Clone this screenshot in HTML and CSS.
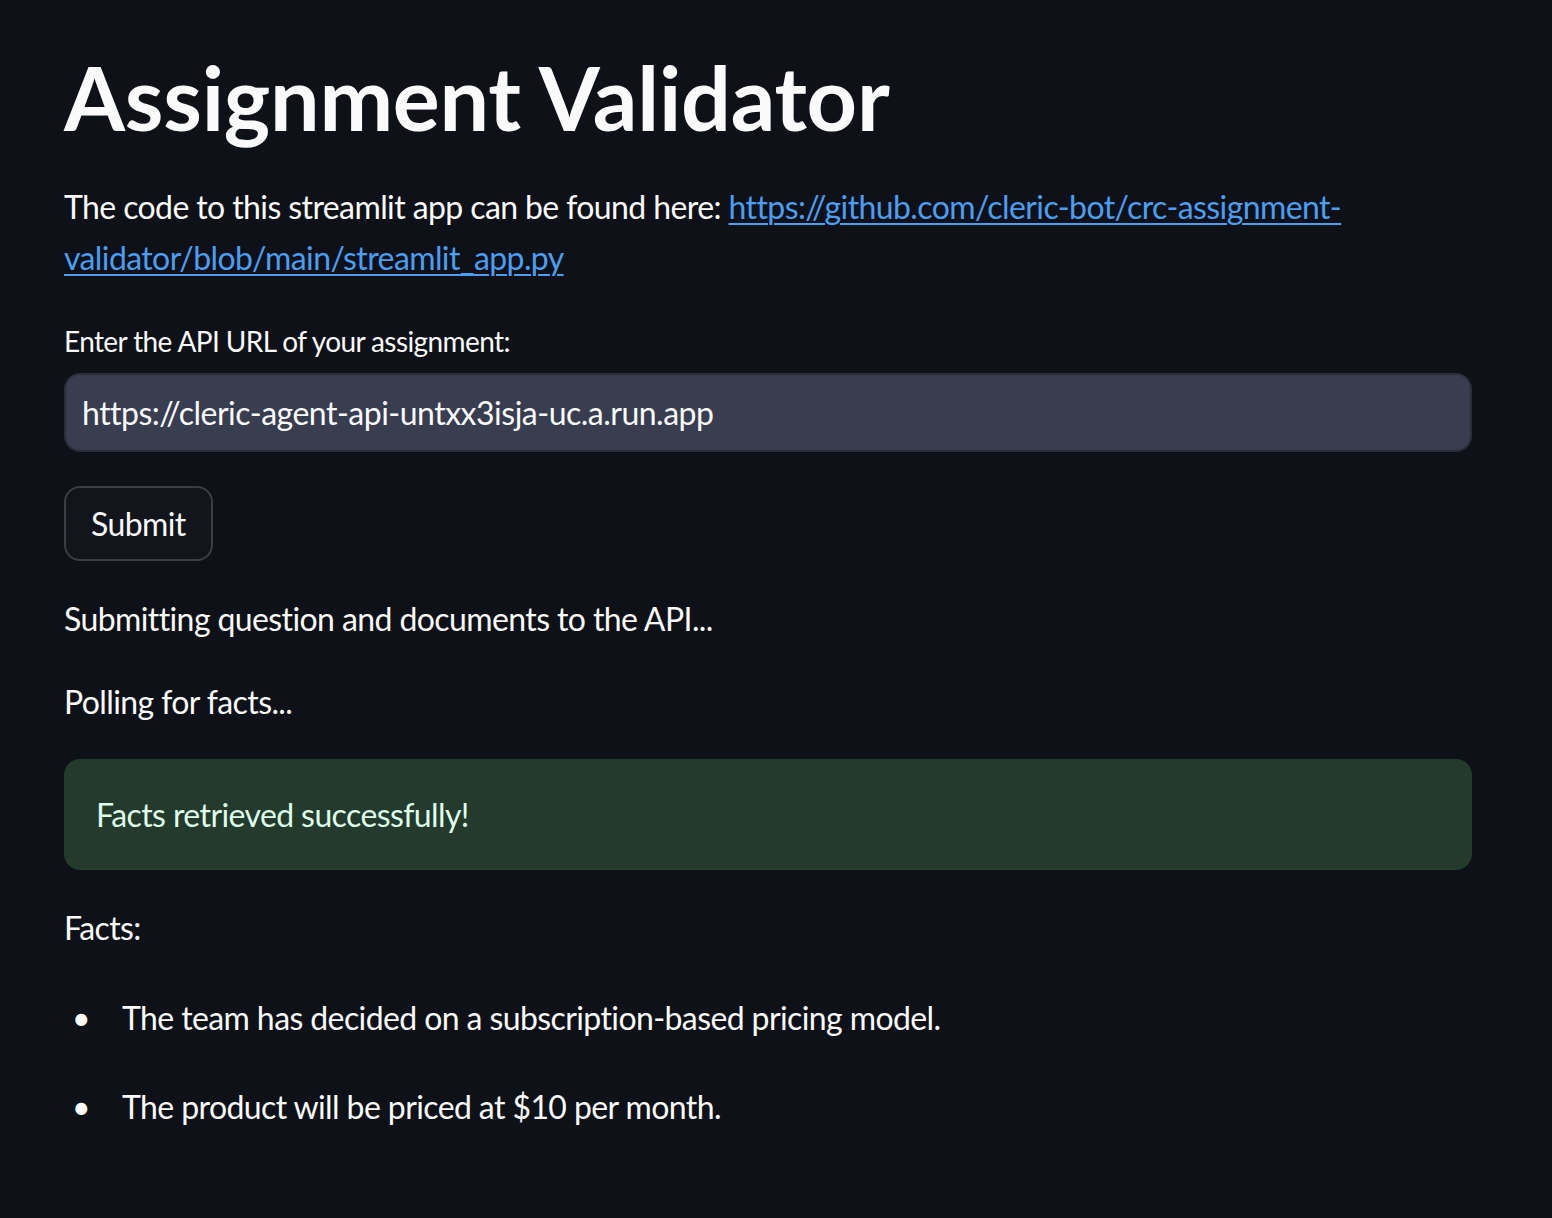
FILE: index.html
```html
<!DOCTYPE html>
<html>
<head>
<meta charset="utf-8">
<link rel="stylesheet" href="styles.css">
</head>
<body>
<main class="app">
  <h1 class="title">Assignment Validator</h1>
  <p class="text intro">The code to this streamlit app can be found here: <a class="link" href="#">https://github.com/cleric-bot/crc-assignment-validator/blob/main/streamlit_app.py</a></p>
  <label class="label">Enter the API URL of your assignment:</label>
  <div class="input">https://cleric-agent-api-untxx3isja-uc.a.run.app</div>
  <div class="btn-row"><button class="btn">Submit</button></div>
  <p class="text status1">Submitting question and documents to the API...</p>
  <p class="text status2">Polling for facts...</p>
  <div class="success">Facts retrieved successfully!</div>
  <p class="text facts">Facts:</p>
  <ul class="list">
    <li class="item">The team has decided on a subscription-based pricing model.</li>
    <li class="item">The product will be priced at $10 per month.</li>
  </ul>
</main>
</body>
</html>
```

FILE: styles.css
```css
html, body {
  margin: 0;
  padding: 0;
  background: #0e1117;
  height: 100%;
}
body {
  font-family: Lato, "Liberation Sans", sans-serif;
  color: #fafafa;
  letter-spacing: -0.6px;
}
.app {
  width: 1408px;
  padding: 0 64px;
  display: flex;
  flex-direction: column;
}
.title {
  margin: 44px 0 0 0;
  font-size: 88px;
  line-height: 106px;
  font-weight: 700;
  letter-spacing: -0.25px;
}
.text {
  margin: 0;
  font-size: 32px;
  line-height: 51px;
}
.intro {
  margin-top: 31px;
}
.link {
  color: #4b9ef2;
  text-decoration: underline;
  text-underline-offset: 4px;
  text-decoration-thickness: 2px;
}
.label {
  margin-top: 38px;
  font-size: 28px;
  line-height: 40px;
}
.input {
  margin-top: 12px;
  height: 79px;
  box-sizing: border-box;
  background: #383d50;
  border: 2px solid #2b2e3a;
  border-radius: 16px;
  padding: 0 16px;
  display: flex;
  align-items: center;
  font-size: 32px;
  letter-spacing: -0.5px;
}
.btn-row {
  margin-top: 34px;
  display: flex;
}
.btn {
  height: 75px;
  padding: 0 25px;
  background: #12151c;
  border: 2px solid #3b3e45;
  border-radius: 16px;
  color: #fafafa;
  font-family: inherit;
  font-size: 32px;
  letter-spacing: -0.6px;
}
.status1 { margin-top: 32px; }
.status2 { margin-top: 32px; }
.success {
  margin-top: 32px;
  height: 111px;
  box-sizing: border-box;
  background: #233a2d;
  border-radius: 16px;
  padding: 0 32px;
  display: flex;
  align-items: center;
  color: #dffde9;
  font-size: 32px;
}
.facts { margin-top: 32px; }
.list {
  margin: 39px 0 0 0;
  padding: 0;
  list-style: none;
  font-size: 32px;
  line-height: 51px;
}
.item {
  display: flex;
  margin-bottom: 38px;
}
.item::before {
  content: "\2022";
  flex: none;
  width: 58px;
  padding-left: 8px;
  box-sizing: border-box;
  font-size: 32px;
}
```
